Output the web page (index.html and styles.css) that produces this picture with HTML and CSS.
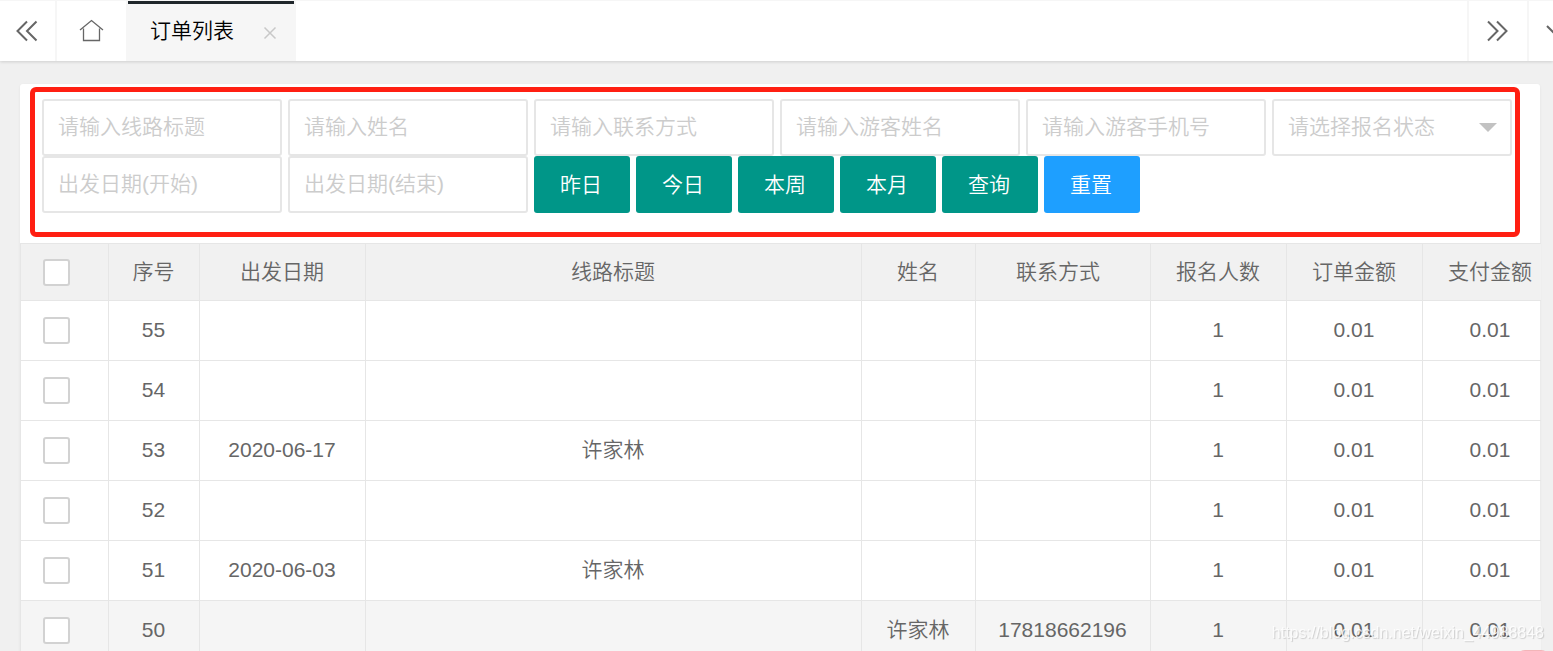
FILE: index.html
```html
<!DOCTYPE html>
<html lang="zh-CN">
<head>
<meta charset="utf-8">
<title>订单列表</title>
<link rel="stylesheet" href="styles.css">
</head>
<body>
<header class="tabs-bar">
  <button class="bar-btn" type="button" aria-label="向左滚动">
    <svg width="24" height="22" viewBox="0 0 24 22"><path d="M11 1.500 1.500 11 11 20.500M20.500 1.500 11 11 20.500 20.500"/></svg>
  </button>
  <a class="home-tab" href="#" aria-label="主页">
    <svg width="26" height="24" viewBox="0 0 26 24"><path d="M1 11 12.500 1.500 24 11M4.500 9.500V21.500H20.500V9.500"/></svg>
  </a>
  <div class="tab">
    <a class="tab-link" href="#">订单列表</a>
    <button class="tab-close" type="button" aria-label="关闭">
      <svg width="14" height="14" viewBox="0 0 14 14"><path d="M1.500 1.500 12.500 12.500M12.500 1.500 1.500 12.500"/></svg>
    </button>
  </div>
  <div class="bar-right">
    <button class="bar-btn" type="button" aria-label="向右滚动">
      <svg width="24" height="22" viewBox="0 0 24 22"><path d="M2 1.500 11.500 11 2 20.500M11 1.500 20.500 11 11 20.500"/></svg>
    </button>
    <button class="bar-btn" type="button" aria-label="更多">
      <svg width="24" height="22" viewBox="0 0 24 22"><path d="M1 6 11 16 21 6"/></svg>
    </button>
  </div>
</header>

<main class="card">
  <form class="filters">
    <input class="field" type="text" placeholder="请输入线路标题" aria-label="线路标题">
    <input class="field" type="text" placeholder="请输入姓名" aria-label="姓名">
    <input class="field" type="text" placeholder="请输入联系方式" aria-label="联系方式">
    <input class="field" type="text" placeholder="请输入游客姓名" aria-label="游客姓名">
    <input class="field" type="text" placeholder="请输入游客手机号" aria-label="游客手机号">
    <div class="select-wrap">
      <select class="field select" aria-label="报名状态"><option>请选择报名状态</option></select>
    </div>
    <input class="field" type="text" placeholder="出发日期(开始)" aria-label="出发日期(开始)">
    <input class="field" type="text" placeholder="出发日期(结束)" aria-label="出发日期(结束)">
    <button class="btn" type="button">昨日</button>
    <button class="btn" type="button">今日</button>
    <button class="btn" type="button">本周</button>
    <button class="btn" type="button">本月</button>
    <button class="btn" type="button">查询</button>
    <button class="btn btn-blue" type="reset">重置</button>
  </form>

  <div class="table-box">
    <table class="orders">
      <colgroup>
        <col class="c-check"><col class="c-id"><col class="c-date"><col><col class="c-name"><col class="c-phone"><col class="c-num"><col class="c-num"><col class="c-num">
      </colgroup>
      <thead>
        <tr><th class="check-cell"><input class="check" type="checkbox" aria-label="全选"></th><th>序号</th><th>出发日期</th><th>线路标题</th><th>姓名</th><th class="phone-head">联系方式</th><th>报名人数</th><th>订单金额</th><th>支付金额</th></tr>
      </thead>
      <tbody>
        <tr><td class="check-cell"><input class="check" type="checkbox" aria-label="选择 55"></td><td>55</td><td></td><td></td><td></td><td></td><td>1</td><td>0.01</td><td>0.01</td></tr>
        <tr><td class="check-cell"><input class="check" type="checkbox" aria-label="选择 54"></td><td>54</td><td></td><td></td><td></td><td></td><td>1</td><td>0.01</td><td>0.01</td></tr>
        <tr><td class="check-cell"><input class="check" type="checkbox" aria-label="选择 53"></td><td>53</td><td>2020-06-17</td><td>许家林</td><td></td><td></td><td>1</td><td>0.01</td><td>0.01</td></tr>
        <tr><td class="check-cell"><input class="check" type="checkbox" aria-label="选择 52"></td><td>52</td><td></td><td></td><td></td><td></td><td>1</td><td>0.01</td><td>0.01</td></tr>
        <tr><td class="check-cell"><input class="check" type="checkbox" aria-label="选择 51"></td><td>51</td><td>2020-06-03</td><td>许家林</td><td></td><td></td><td>1</td><td>0.01</td><td>0.01</td></tr>
        <tr class="active"><td class="check-cell"><input class="check" type="checkbox" aria-label="选择 50"></td><td>50</td><td></td><td></td><td>许家林</td><td>17818662196</td><td>1</td><td>0.01</td><td>0.01</td></tr>
      </tbody>
    </table>
  </div>
</main>
<div class="watermark">https://blog.csdn.net/weixin_44988848</div>
<div class="float-dot"></div>
</body>
</html>
```
FILE: styles.css
```css
* {
  box-sizing: border-box;
}

body {
  margin: 0;
  height: 100vh;
  overflow: hidden;
  background: #f0f0f0;
  color: #666;
  font: 350 21px/30px "Liberation Sans", "Noto Sans CJK SC", sans-serif;
}

button,
input,
select {
  margin: 0;
  font: inherit;
}

svg {
  display: block;
  fill: none;
  stroke: #666;
  stroke-width: 2;
}

/* Tab bar */
.tabs-bar {
  display: flex;
  height: 61px;
  border-top: 1px solid #f6f6f6;
  background: #fff;
  box-shadow: 0 1px 3px rgba(0, 0, 0, 0.14);
}

.bar-btn {
  display: flex;
  align-items: center;
  justify-content: center;
  width: 57px;
  padding: 0;
  border: 0;
  border-right: 2px solid #f6f6f6;
  background: none;
}

.home-tab {
  display: flex;
  align-items: center;
  justify-content: center;
  width: 69px;
}

.home-tab svg {
  stroke-width: 1.3;
}

.tab {
  display: flex;
  align-items: center;
  gap: 29px;
  padding: 0 17px 0 22px;
  border: solid #f6f6f6;
  border-width: 0 2px;
  background: #f6f6f6 linear-gradient(#1f262b, #1f262b) no-repeat padding-box;
  background-size: 100% 3px;
  background-clip: border-box;
}

.tab-link {
  color: #000;
  text-decoration: none;
}

.tab-close {
  padding: 4px 0 0;
  border: 0;
  background: none;
}

.tab-close svg {
  stroke: #c8c8c8;
  stroke-width: 1.5;
}

.bar-right {
  display: flex;
  margin-left: auto;
  margin-right: -34px;
}

.bar-right .bar-btn {
  width: 60px;
  border-right: 0;
  border-left: 2px solid #f6f6f6;
}

/* Card and filters */
.card {
  display: flow-root;
  margin: 23px 13px 0 20px;
  border-radius: 3px 3px 0 0;
  background: #fff;
  box-shadow: 0 1px 3px rgba(0, 0, 0, 0.06);
}

.filters {
  display: flex;
  flex-wrap: wrap;
  column-gap: 6px;
  margin: 3px 20px 6px 10px;
  padding: 7px 3px 19px 7px;
  border: 5px solid #ff1f12;
  border-radius: 6px;
}

.field {
  width: 240px;
  height: 57px;
  padding: 0 14px 2px;
  border: 2px solid #e6e6e6;
  border-radius: 3px;
  background: #fff;
  color: #666;
}

.field::placeholder {
  color: #ccc;
  opacity: 1;
}

.select-wrap {
  position: relative;
  width: 240px;
}

.select {
  display: block;
  appearance: none;
  color: #ccc;
}

.select-wrap::after {
  content: "";
  position: absolute;
  top: 24px;
  right: 15px;
  border: 9px solid transparent;
  border-top-color: #c2c2c2;
  border-bottom-width: 0;
  pointer-events: none;
}

.btn {
  width: 96px;
  height: 57px;
  padding: 0 2px 0 0;
  border: 0;
  border-radius: 3px;
  background: #009688;
  color: #fff;
}

.btn-blue {
  background: #1e9fff;
}

/* Orders table */
.table-box {
  margin-right: -1px;
  overflow: hidden;
  border-top: 1px solid #e6e6e6;
  border-left: 1px solid #e6e6e6;
}

.orders {
  width: calc(100% + 18px);
  table-layout: fixed;
  border-spacing: 0;
}

.c-check { width: 88px; }
.c-id { width: 91px; }
.c-date { width: 166px; }
.c-name { width: 114px; }
.c-phone { width: 175px; }
.c-num { width: 136px; }

.orders th,
.orders td {
  height: 60px;
  padding: 0 1px 2px 0;
  border-right: 1px solid #e6e6e6;
  border-bottom: 1px solid #e6e6e6;
  font-weight: inherit;
  text-align: center;
}

.orders th {
  height: 57px;
  padding-bottom: 1px;
  background: #f1f1f1;
}

.orders .phone-head {
  padding-right: 10px;
}

.orders .active td {
  background: #f5f5f5;
}

.orders .check-cell {
  padding: 0 0 0 22px;
  text-align: left;
}

.check {
  display: block;
  appearance: none;
  width: 27px;
  height: 27px;
  border: 2px solid #d2d2d2;
  border-radius: 3px;
  background: #fff;
}

/* Overlays */
.watermark {
  position: fixed;
  right: 9px;
  bottom: 3px;
  color: rgba(255, 255, 255, 0.8);
  font-size: 16px;
  line-height: 30px;
  text-shadow: 1px 1px 1px rgba(0, 0, 0, 0.16);
}

.float-dot {
  position: fixed;
  right: 4px;
  bottom: -31px;
  width: 32px;
  height: 32px;
  border-radius: 8px;
  background: #f3b5b8;
}
```
